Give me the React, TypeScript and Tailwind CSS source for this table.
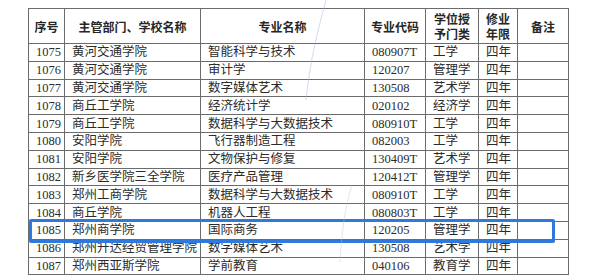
const rows = [
  ['1075', '黄河交通学院', '智能科学与技术', '080907T', '工学', '四年'],
  ['1076', '黄河交通学院', '审计学', '120207', '管理学', '四年'],
  ['1077', '黄河交通学院', '数字媒体艺术', '130508', '艺术学', '四年'],
  ['1078', '商丘工学院', '经济统计学', '020102', '经济学', '四年'],
  ['1079', '商丘工学院', '数据科学与大数据技术', '080910T', '工学', '四年'],
  ['1080', '安阳学院', '飞行器制造工程', '082003', '工学', '四年'],
  ['1081', '安阳学院', '文物保护与修复', '130409T', '艺术学', '四年'],
  ['1082', '新乡医学院三全学院', '医疗产品管理', '120412T', '管理学', '四年'],
  ['1083', '郑州工商学院', '数据科学与大数据技术', '080910T', '工学', '四年'],
  ['1084', '商丘学院', '机器人工程', '080803T', '工学', '四年'],
  ['1085', '郑州商学院', '国际商务', '120205', '管理学', '四年'],
  ['1086', '郑州升达经贸管理学院', '数字媒体艺术', '130508', '艺术学', '四年'],
  ['1087', '郑州西亚斯学院', '学前教育', '040106', '教育学', '四年'],
];

const head = 'border border-[#6b6b6b] text-center font-bold text-[12px] leading-[15px] text-[#262626]';
const cell = 'border border-[#6b6b6b] px-[7px] py-0 text-[12.5px] leading-[16px] text-[#2b2b2b] whitespace-nowrap';

export default function App() {
  return (
    <div className="relative w-[600px] h-[276px] overflow-hidden bg-white font-['Liberation_Serif','Noto_Sans_CJK_SC',serif]">
      <table className="ml-[28px] mt-[8px] w-[540px] table-fixed border-collapse">
        <colgroup>
          <col className="w-[36px]" />
          <col className="w-[136px]" />
          <col className="w-[164px]" />
          <col className="w-[61px]" />
          <col className="w-[53px]" />
          <col className="w-[39px]" />
          <col className="w-[51px]" />
        </colgroup>
        <thead className="font-['Noto_Sans_CJK_SC',sans-serif]">
          <tr className="h-[35px]">
            <th className={head}>序号</th>
            <th className={head}>主管部门、学校名称</th>
            <th className={head}>专业名称</th>
            <th className={head}>专业代码</th>
            <th className={head}>学位授<br />予门类</th>
            <th className={head}>修业<br />年限</th>
            <th className={head}>备注</th>
          </tr>
        </thead>
        <tbody>
          {rows.map((r) => (
            <tr key={r[0]} className="h-[17.8px]">
              <td className={cell + ' text-center px-0'}>{r[0]}</td>
              <td className={cell}>{r[1]}</td>
              <td className={cell}>{r[2]}</td>
              <td className={cell}>{r[3]}</td>
              <td className={cell}>{r[4]}</td>
              <td className={cell}>{r[5]}</td>
              <td className={cell}></td>
            </tr>
          ))}
        </tbody>
      </table>

      {/* highlight box drawn over row 1085 */}
      <div className="absolute left-[29px] top-[219px] w-[526px] h-[24px] rounded-[2px] border-[3px] border-[#2f78dc]" />

      {/* faint pen marks on the paper */}
      <svg className="absolute inset-0 pointer-events-none" width="600" height="276">
        <path d="M326 0 C318 30 310 60 306 100" stroke="#9fb8e0" strokeWidth="1" fill="none" opacity="0.5" />
        <path d="M352 185 C346 205 342 225 340 262" stroke="#b3c6e6" strokeWidth="1" fill="none" opacity="0.45" />
      </svg>
    </div>
  );
}
